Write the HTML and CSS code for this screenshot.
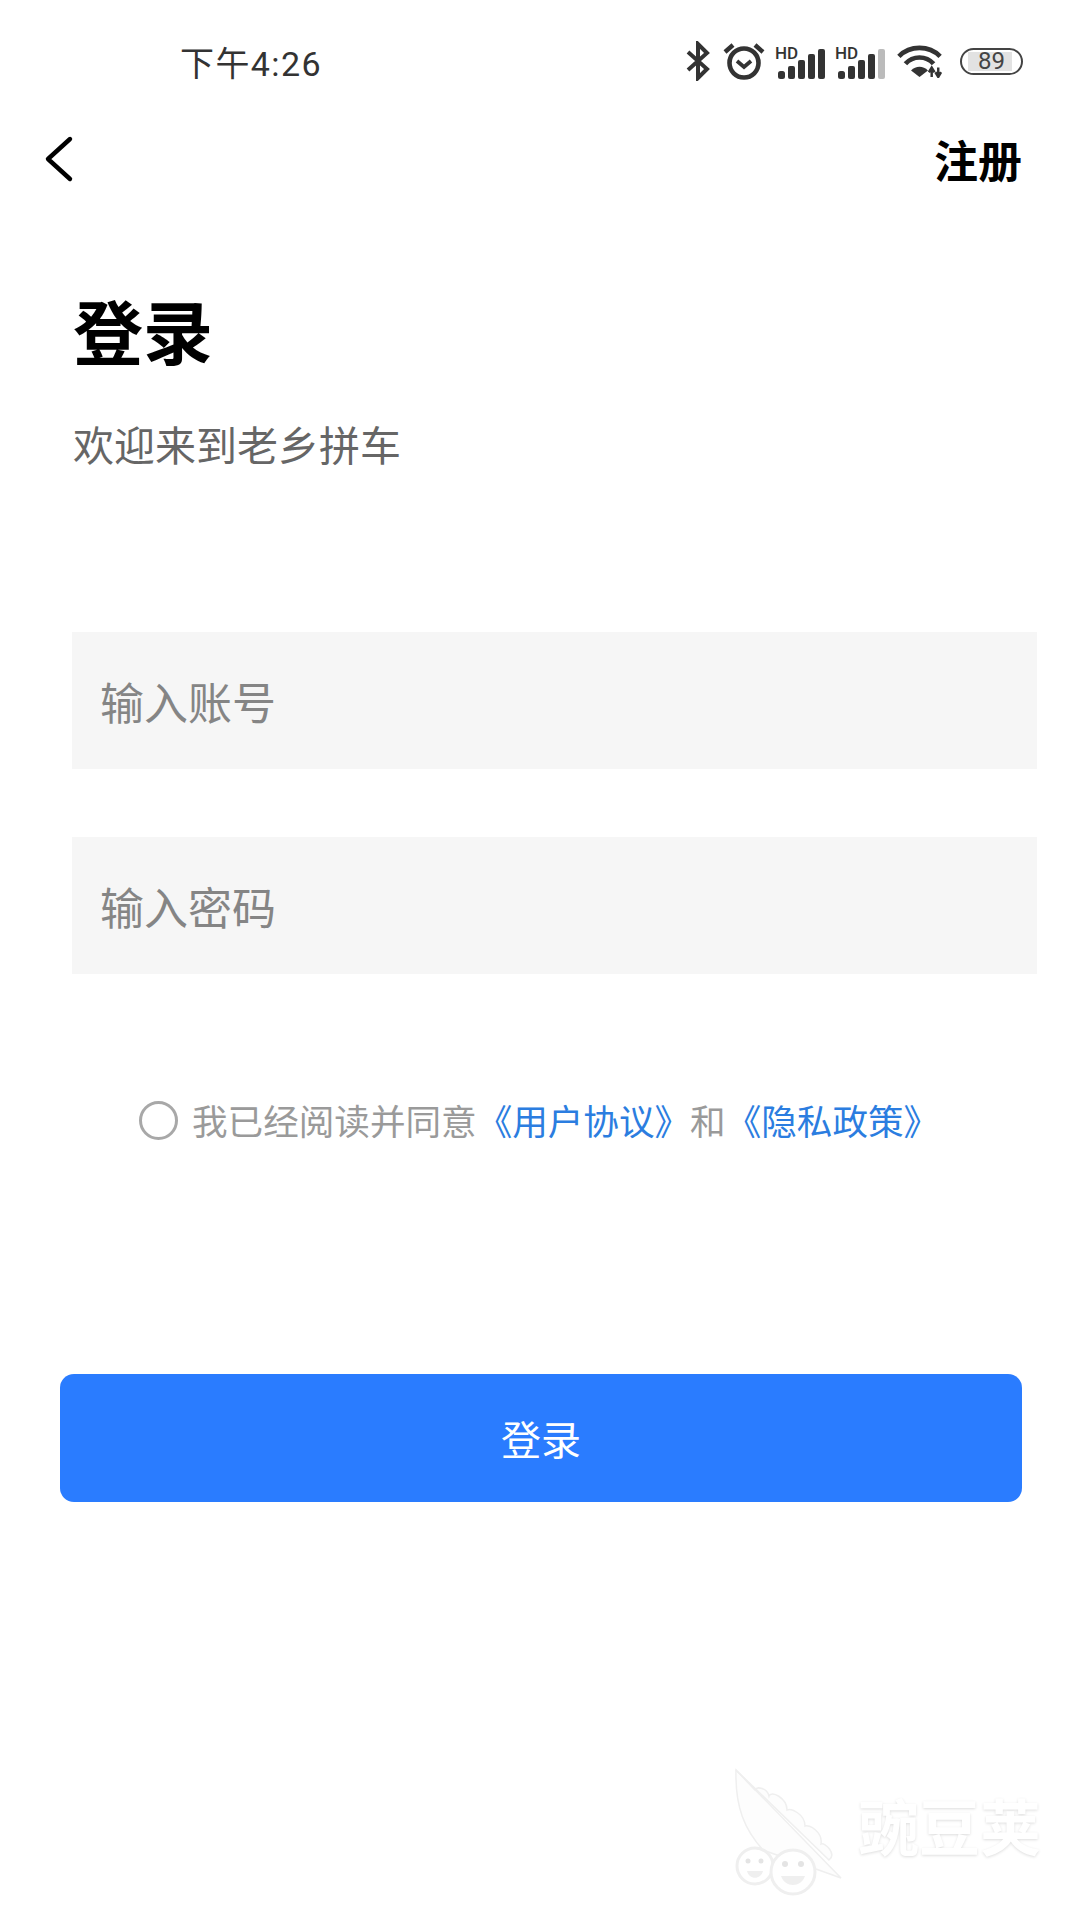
FILE: index.html
```html
<!DOCTYPE html>
<html lang="zh-CN">
<head>
    <meta charset="UTF-8">
    <meta name="viewport" content="width=device-width, initial-scale=1.0">
    <title>登录</title>
    <link rel="stylesheet" href="styles.css">
</head>
<body>
    <div class="phone">
        <!-- Status bar -->
        <div class="status-bar">
            <span class="status-time">下午4:26</span>
            <div class="status-icons">
                <svg class="ic-bt" width="26" height="40" viewBox="0 0 26 40"><path d="M3 11 L22 28 L13 37 V3 L22 12 L3 29" fill="none" stroke="#333" stroke-width="4"/></svg>
                <svg class="ic-alarm" width="42" height="40" viewBox="0 0 42 40"><circle cx="21" cy="22" r="14.5" fill="none" stroke="#333" stroke-width="4.6"/><path d="M14 20 L21 26 L28 20" fill="none" stroke="#333" stroke-width="3.8"/><path d="M2 11 L10 4 M40 11 L32 4" stroke="#333" stroke-width="4.4"/></svg>
                <div class="signal">
                    <span class="hd">HD</span>
                    <svg width="48" height="32" viewBox="0 0 48 32"><rect x="1" y="24" width="7" height="8" rx="2.5" fill="#333"/><rect x="11" y="19" width="7" height="13" rx="2" fill="#333"/><rect x="21" y="13" width="7" height="19" rx="2" fill="#333"/><rect x="31" y="7" width="7" height="25" rx="2" fill="#333"/><rect x="41" y="2" width="7" height="30" rx="2" fill="#333"/></svg>
                </div>
                <div class="signal">
                    <span class="hd">HD</span>
                    <svg width="48" height="32" viewBox="0 0 48 32"><rect x="1" y="24" width="7" height="8" rx="2.5" fill="#333"/><rect x="11" y="19" width="7" height="13" rx="2" fill="#333"/><rect x="21" y="13" width="7" height="19" rx="2" fill="#333"/><rect x="31" y="7" width="7" height="25" rx="2" fill="#333"/><rect x="41" y="2" width="7" height="30" rx="2" fill="#bbb"/></svg>
                </div>
                <svg class="ic-wifi" width="45" height="34" viewBox="0 0 48 36"><path d="M2 13 C14 1 34 1 46 13" fill="none" stroke="#333" stroke-width="5"/><path d="M9 21 C17 12 31 12 39 21" fill="none" stroke="#333" stroke-width="5"/><path d="M15 28 C20 23 28 23 33 28 L24 35 Z" fill="#333"/><path d="M37 25 V35 M44 25 V35 M34 30 L37 25 L40 30 M41 30 L44 35 L47 30" fill="none" stroke="#333" stroke-width="2.6"/></svg>
                <div class="battery"><span class="battery-fill"></span><span class="battery-num">89</span></div>
            </div>
        </div>

        <!-- Nav -->
        <div class="nav-bar">
            <svg class="back" width="30" height="48" viewBox="0 0 30 48"><path d="M26 4 L4 24 L26 44" fill="none" stroke="#000" stroke-width="4.4" stroke-linecap="round" stroke-linejoin="round"/></svg>
            <a class="register">注册</a>
        </div>

        <!-- Heading -->
        <div class="heading">
            <h1>登录</h1>
            <p>欢迎来到老乡拼车</p>
        </div>

        <!-- Form -->
        <form class="login-form">
            <div class="field">输入账号</div>
            <div class="field">输入密码</div>

            <div class="agree">
                <span class="radio"></span>
                <span>我已经阅读并同意</span>
                <a>《用户协议》</a>
                <span>和</span>
                <a>《隐私政策》</a>
            </div>

            <button type="button" class="submit">登录</button>
        </form>

        <!-- Watermark -->
        <div class="watermark">
            <svg width="112" height="128" viewBox="0 0 112 128"><path d="M3 2 C2 40 12 62 30 82 L108 110 Z" fill="#fdfdfd" stroke="#efefef" stroke-width="1.5"/><path d="M3 2 L96 92 C104 86 92 74 88 76 C90 64 76 56 72 58 C72 46 58 40 54 42 C54 30 38 22 36 28 C34 20 24 18 22 22 Z" fill="#fdfdfd" stroke="#efefef" stroke-width="1.5"/><circle cx="22" cy="98" r="18" fill="#fff" stroke="#efefef" stroke-width="3"/><circle cx="60" cy="104" r="22" fill="#fff" stroke="#efefef" stroke-width="3"/><circle cx="15" cy="93" r="2.5" fill="#e4e4e4"/><circle cx="28" cy="93" r="2.5" fill="#e4e4e4"/><circle cx="52" cy="96" r="3" fill="#e4e4e4"/><circle cx="68" cy="96" r="3" fill="#e4e4e4"/><path d="M14 103 H30 C28 112 16 112 14 103 Z M48 108 H72 C68 120 52 120 48 108 Z" fill="#efefef"/></svg>
            <span class="watermark-text">豌豆荚</span>
        </div>
    </div>
</body>
</html>
```

FILE: styles.css
```css
* {
    box-sizing: border-box;
}
body {
    margin: 0;
    background-color: #fff;
    font-family: "Noto Sans CJK SC", "Noto Sans", sans-serif;
}
.phone {
    position: relative;
    width: 1080px;
    height: 1920px;
    overflow: hidden;
    background-color: #fff;
}
.status-bar {
    display: flex;
    justify-content: space-between;
    align-items: center;
    height: 62px;
    margin-top: 30px;
    padding: 0 57px 0 180px;
}
.status-time {
    font-size: 34px;
    color: #333;
    font-family: "Roboto", "Noto Sans CJK SC", sans-serif;
    letter-spacing: 1.4px;
}
.status-icons {
    display: flex;
    align-items: center;
    gap: 12px;
}
.signal {
    position: relative;
    display: flex;
    padding-top: 4px;
}
.hd {
    position: absolute;
    left: -2px;
    top: 0;
    font-family: "Roboto", sans-serif;
    font-size: 17px;
    font-weight: 500;
    color: #333;
}
.battery {
    position: relative;
    width: 63px;
    height: 27px;
    margin-left: 6px;
    border: 2.5px solid #444;
    border-radius: 14px;
    display: flex;
    align-items: center;
    justify-content: center;
    overflow: hidden;
}
.battery-fill {
    position: absolute;
    left: 6px;
    top: 2px;
    bottom: 2px;
    width: 44px;
    background-color: #e2e2e2;
}
.battery-num {
    position: relative;
    font-family: "Roboto", sans-serif;
    font-size: 24px;
    color: #444;
}
.nav-bar {
    display: flex;
    justify-content: space-between;
    align-items: center;
    height: 80px;
    margin-top: 27px;
    padding: 0 58px 0 44px;
}
.register {
    font-size: 44px;
    font-weight: 700;
    color: #000;
}
.heading {
    padding: 0 73px;
    margin-top: 86px;
}
.heading h1 {
    margin: 0;
    font-size: 70px;
    line-height: 90px;
    font-weight: 700;
    color: #000;
}
.heading p {
    margin: 43px 0 0 0;
    font-size: 41px;
    line-height: 50px;
    color: #666;
}
.login-form {
    display: flex;
    flex-direction: column;
    margin-top: 164px;
}
.field {
    display: flex;
    align-items: center;
    height: 137px;
    margin: 0 43px 68px 72px;
    padding-left: 28px;
    background-color: #f6f6f6;
    font-size: 44px;
    color: #858585;
}
.agree {
    display: flex;
    align-items: center;
    margin-top: 53px;
    padding-left: 139px;
    font-size: 35.6px;
    line-height: 50px;
    color: #9a9a9a;
}
.agree a {
    color: #2b7de0;
}
.radio {
    width: 39px;
    height: 39px;
    margin-right: 14px;
    border: 3.5px solid #a8a8a8;
    border-radius: 50%;
}
.submit {
    height: 128px;
    margin: 229px 58px 0 60px;
    border: none;
    border-radius: 14px;
    background-color: #2a7cff;
    color: #fff;
    font-family: inherit;
    font-size: 40px;
}
.watermark {
    position: absolute;
    left: 733px;
    top: 1768px;
    display: flex;
    align-items: center;
    gap: 13px;
}
.watermark-text {
    font-size: 61px;
    font-weight: 700;
    color: #fff;
    text-shadow: 0 1px 3px #ddd;
    margin-top: -16px;
}
```
